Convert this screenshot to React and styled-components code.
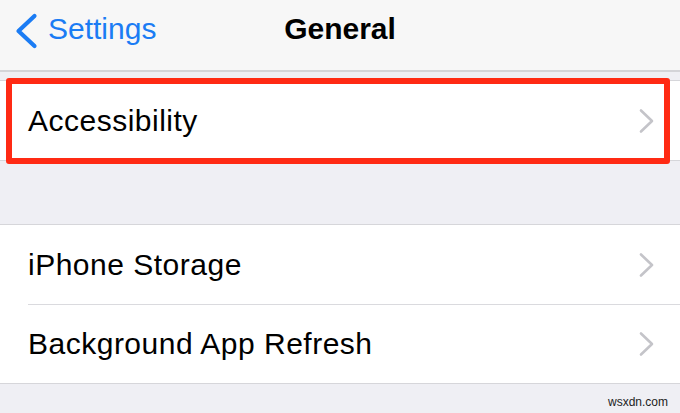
import React from "react";
import styled, { createGlobalStyle } from "styled-components";

const GlobalStyle = createGlobalStyle`
  html, body {
    margin: 0;
    padding: 0;
    background: #efeff4;
  }
  body {
    font-family: "Liberation Sans", Arial, sans-serif;
    -webkit-font-smoothing: antialiased;
  }
`;

const Screen = styled.div`
  width: 680px;
  height: 413px;
  overflow: hidden;
  background: #efeff4;
  display: flex;
  flex-direction: column;
`;

const NavBar = styled.div`
  height: 72px;
  box-sizing: border-box;
  padding-bottom: 13px;
  background: #f7f7f7;
  border-bottom: 2px solid #d4d4d8;
  display: grid;
  grid-template-columns: 1fr auto 1fr;
  align-items: center;
`;

const BackButton = styled.div`
  display: flex;
  align-items: center;
  gap: 10px;
  padding-left: 14px;
  color: #1b7cf4;
  font-size: 30px;
`;

const BackArrow = styled.svg`
  margin-top: 4px;
`;

const Title = styled.div`
  font-size: 30px;
  font-weight: 700;
  color: #000;
`;

const Group = styled.div`
  position: relative;
  margin-top: ${(p) => p.$gap}px;
  background: #fff;
  border-top: 1px solid #d6d6da;
  border-bottom: 1px solid #d6d6da;
`;

const Row = styled.div`
  height: 79px;
  display: flex;
  align-items: center;
  justify-content: space-between;
  padding: 0 25px 0 28px;
  position: relative;
  font-size: 30px;
  letter-spacing: 0.5px;
  color: #000;

  & + & {
    border-top: 1px solid #dadade;
    height: 78px;
  }
  & + &::before {
    content: "";
    position: absolute;
    top: -1px;
    left: 0;
    width: 28px;
    height: 1px;
    background: #fff;
  }
`;

const Highlight = styled.div`
  position: absolute;
  top: -3px;
  left: 6px;
  right: 10px;
  bottom: -4px;
  border: 6px solid #ff2a14;
  border-radius: 3px;
  pointer-events: none;
`;

const Watermark = styled.div`
  margin-top: 12px;
  padding-right: 12px;
  text-align: right;
  font-size: 12px;
  line-height: 12px;
  color: #222;
`;

const Chevron = () => (
  <svg width="17" height="26" viewBox="0 0 17 26">
    <polyline
      points="3,2.5 14,13 3,23.5"
      fill="none"
      stroke="#c4c4c9"
      strokeWidth="2.6"
      strokeLinecap="round"
      strokeLinejoin="round"
    />
  </svg>
);

const Cell = ({ label }) => (
  <Row>
    <span>{label}</span>
    <Chevron />
  </Row>
);

const App = () => {
  return (
    <Screen>
      <GlobalStyle />
      <NavBar>
        <BackButton>
          <BackArrow width="24" height="36" viewBox="0 0 24 36">
            <polyline
              points="20.5,3 4.5,18 20.5,33"
              fill="none"
              stroke="#1b7cf4"
              strokeWidth="4.2"
              strokeLinecap="round"
              strokeLinejoin="round"
            />
          </BackArrow>
          <span>Settings</span>
        </BackButton>
        <Title>General</Title>
        <div />
      </NavBar>

      <Group $gap={8}>
        <Cell label="Accessibility" />
        <Highlight />
      </Group>

      <Group $gap={63}>
        <Cell label="iPhone Storage" />
        <Cell label="Background App Refresh" />
      </Group>

      <Watermark>wsxdn.com</Watermark>
    </Screen>
  );
};

export default App;
